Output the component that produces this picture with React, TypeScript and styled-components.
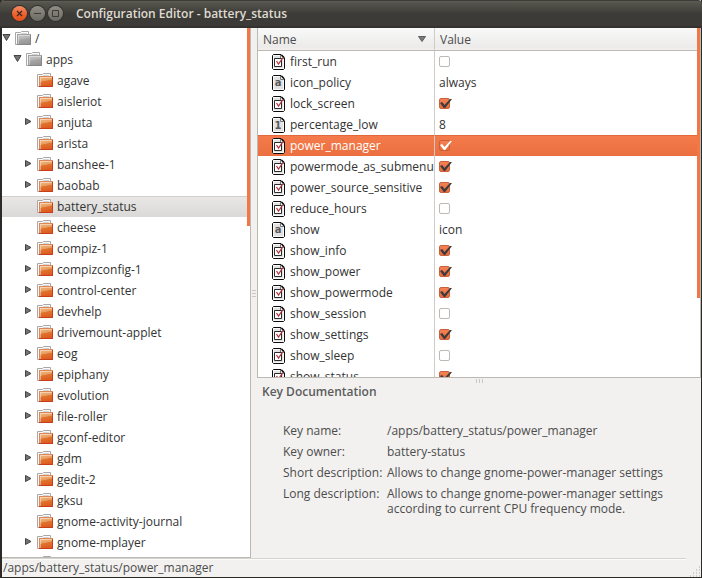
import React, { useState } from "react";
import styled, { createGlobalStyle, css } from "styled-components";

const GlobalStyle = createGlobalStyle`
  * { box-sizing: border-box; }
  body {
    margin: 0;
    background: #2b2a27;
    color: #333;
    font: 12px/21px "Open Sans", "Noto Sans", sans-serif;
  }
`;

const Window = styled.div`
  display: flex;
  flex-direction: column;
  height: 100vh;
  border: solid #2b2a27;
  border-width: 0 1px 1px 2px;
  background: #f2f1f0;
`;

const TitleBar = styled.header`
  display: flex;
  align-items: center;
  flex: none;
  gap: 3px;
  height: 28px;
  margin: 0 -1px 0 -2px;
  padding: 0 12px;
  border-top: 1px solid #3c3b37;
  border-bottom: 2px solid #33322e;
  border-radius: 4px 4px 0 0;
  background: linear-gradient(#5f5d55, #55534c 2px, #3c3b37 13px);
`;

const WindowButton = styled.button<{ $close?: boolean }>`
  display: grid;
  place-items: center;
  width: 15px;
  height: 15px;
  padding: 0;
  border: 0;
  border-radius: 50%;
  box-shadow: 0 0 0 1px #32312d;
  background: ${(p) =>
    p.$close
      ? "linear-gradient(#f58a62, #ec5f2a 60%, #e5501a)"
      : "linear-gradient(#8f8d85, #6c6a63)"};
  color: #3b2a20;

  svg {
    display: block;
  }
`;

const Title = styled.h1`
  margin: 0 0 0 10px;
  overflow: hidden;
  color: #dfdbd2;
  font-size: 12px;
  font-weight: 600;
  white-space: nowrap;
`;

const Panes = styled.main`
  display: flex;
  flex: 1;
  min-height: 0;
`;

const TreePane = styled.nav`
  display: flex;
  flex: none;
  width: 249px;
  border: solid #bcb9b2;
  border-width: 0 1px 1px 0;
  background: #fff;
`;

const ScrollArea = styled.div`
  flex: 1;
  min-width: 0;
  overflow: hidden;
`;

const Track = styled.div`
  flex: none;
  width: 3px;
`;

const Thumb = styled.div<{ $size: number }>`
  height: ${(p) => p.$size}%;
  background: #f07746;
`;

const TreeList = styled.ul`
  margin: 0;
  padding: 0;
  list-style: none;
`;

const TreeRow = styled.li<{ $level: number; $selected?: boolean }>`
  display: flex;
  align-items: center;
  gap: 4px;
  height: 21px;
  padding-left: ${(p) => p.$level * 11}px;
  white-space: nowrap;
  ${(p) =>
    p.$selected &&
    css`
      box-shadow: inset 0 1px #cfcecc;
      background: linear-gradient(#e9e8e7, #dad9d7);
    `}
`;

const Expander = styled.button`
  display: flex;
  align-items: center;
  justify-content: center;
  flex: none;
  width: 9px;
  height: 16px;
  margin-bottom: 2px;
  padding: 0;
  border: 0;
  background: none;
`;

const ExpanderGap = styled.span`
  flex: none;
  width: 9px;
`;

const NodeIcon = styled.svg`
  flex: none;
  display: block;
`;

const Grip = styled.div<{ $vertical?: boolean }>`
  display: flex;
  flex: none;
  flex-direction: ${(p) => (p.$vertical ? "column" : "row")};
  align-items: center;
  justify-content: center;
  gap: 2px;
  ${(p) => (p.$vertical ? "width: 6px;" : "height: 6px;")}

  i {
    background: #cbc8c3;
    ${(p) => (p.$vertical ? "width: 4px; height: 1px;" : "width: 1px; height: 4px;")}
  }
`;

const RightSide = styled.div`
  display: flex;
  flex: 1;
  flex-direction: column;
  min-width: 0;
`;

const KeyPane = styled.section`
  display: flex;
  flex: 1;
  min-height: 0;
  border: solid #bcb9b2;
  border-width: 0 1px 1px 1px;
  background: #fff;
`;

const KeyTable = styled.table`
  width: 100%;
  border-collapse: separate;
  border-spacing: 0;
  table-layout: fixed;
`;

const HeadCell = styled.th<{ $wide?: boolean }>`
  height: 23px;
  padding: 0;
  border-bottom: 1px solid #bcb9b2;
  border-right: ${(p) => (p.$wide ? "1px solid #cfccc7" : "0")};
  background: linear-gradient(#f9f9f9, #ecebea 19px, #f2f1f0);
  ${(p) => p.$wide && "width: 177px;"}
`;

const HeadButton = styled.button`
  display: flex;
  align-items: center;
  justify-content: space-between;
  width: 100%;
  height: 22px;
  padding: 0 8px 0 5px;
  border: 0;
  background: none;
  color: #4c4c4c;
  font: inherit;
  font-weight: 400;
`;

const KeyRow = styled.tr<{ $selected?: boolean }>`
  ${(p) =>
    p.$selected &&
    css`
      color: #fff;
      td {
        border-top: 1px solid #e2693a;
        border-right-color: #d0643c;
        background: linear-gradient(#f47b4b, #eb6f40);
      }
    `}
`;

const Cell = styled.td`
  height: 21px;
  padding: 0 0 0 4px;
  line-height: 20px;
  white-space: nowrap;
  overflow: hidden;

  &:first-child {
    padding-left: 14px;
    border-right: 1px solid #cfccc7;
  }
`;

const KeyName = styled.span`
  display: flex;
  align-items: center;
  gap: 5px;
  height: 20px;
`;

const Tick = styled.label`
  position: relative;
  display: block;
  width: 13px;
  height: 12px;

  svg {
    position: absolute;
    inset: 0;
    pointer-events: none;
  }
`;

const TickInput = styled.input`
  appearance: none;
  display: block;
  width: 11px;
  height: 11px;
  margin: 0;
  border: 1px solid #bdbab5;
  border-radius: 2px;
  background: #fff;

  &:checked {
    border-color: #c9623c;
    background: linear-gradient(#f58253, #ea6a3a);
  }
`;

const Docs = styled.section`
  flex: none;
  height: 174px;
  padding: 0 5px;
  color: #4c4c4c;
`;

const DocsTitle = styled.h2`
  margin: 0;
  color: #5c5c5c;
  font-size: 12px;
  font-weight: 600;
  line-height: 16px;
`;

const DocsList = styled.dl`
  display: grid;
  grid-template-columns: 98px minmax(0, 290px);
  gap: 6px;
  margin: 23px 0 0 21px;
  line-height: 15px;

  dt,
  dd {
    margin: 0;
    white-space: nowrap;
  }
  dd {
    white-space: normal;
  }
`;

const StatusBar = styled.footer`
  display: flex;
  align-items: flex-end;
  justify-content: space-between;
  flex: none;
  height: 19px;
  color: #4c4c4c;
`;

const StatusText = styled.div`
  flex: 1;
  height: 19px;
  padding-left: 1px;
  border-top: 1px solid #d6d4d1;
  box-shadow: inset 0 1px #fbfbfa;
  line-height: 18px;
`;

const SizeGrip = styled.svg`
  display: block;
  flex: none;
  margin-left: 4px;
`;

function Folder({ open }: { open?: boolean }) {
  const id = open ? "folder-grey" : "folder-orange";
  return (
    <NodeIcon width="16" height="16" viewBox="0 0 16 16">
      <defs>
        <linearGradient id={id} x1="0" y1="0" x2="0.25" y2="1">
          <stop offset="0" stopColor={open ? "#cccccc" : "#f3c795"} />
          <stop offset="0.5" stopColor={open ? "#b4b4b4" : "#e89a5c"} />
          <stop offset="0.55" stopColor={open ? "#a6a6a6" : "#e0742f"} />
          <stop offset="1" stopColor={open ? "#959595" : "#de5a20"} />
        </linearGradient>
      </defs>
      <path d="M2 13.500H.5v-12h5l1-1H13.500V3" fill="#fafafa" stroke="#a8a8a8" />
      <path d="M6 2.500h6" stroke="#d4d4d4" />
      <path d="M2 3h14v11H2z" fill={`url(#${id})`} />
      <path d="M2 3.500h14M2.500 4v9" fill="none" stroke={open ? "#a2a2a2" : "#dd8656"} />
      <path d="M15.500 4v9.500H2" fill="none" stroke={open ? "#868686" : "#c5401a"} />
      <path d="M3.500 13V4.500H15" fill="none" stroke="#fff" strokeOpacity="0.4" />
    </NodeIcon>
  );
}

type Kind = "bool" | "string" | "int";

const KindLetter = styled.text`
  fill: #5a5a5a;
  font: 700 10px "DejaVu Sans", sans-serif;
  text-anchor: middle;
`;

function KindIcon({ kind }: { kind: Kind }) {
  return (
    <NodeIcon width="13" height="16" viewBox="0 0 13 16" aria-hidden="true">
      <path
        d="M1.500.5h7.500l3.500 3.500v10.500l-1 1h-10l-1-1v-13z"
        fill="#e2e2e2"
        stroke="#0c0c0c"
      />
      <path d="M8 1.500H1.500v13h10V5" fill="none" stroke="#fff" strokeOpacity="0.8" />
      <path d="M8.500 1v3.500H12" fill="#f4f4f4" stroke="#777" />
      <path d="M9.500 1L12 3.500" stroke="#0c0c0c" strokeWidth="1.500" />
      {kind === "bool" && (
        <>
          <path d="M2.500 4.500h7v8h-7z" fill="#fff" stroke="#2a2a2a" />
          <path d="M4.500 7l2 3L11 3.500" fill="none" stroke="#b5363e" strokeWidth="1.300" />
        </>
      )}
      {kind === "string" && (
        <KindLetter x="6" y="11">
          a
        </KindLetter>
      )}
      {kind === "int" && (
        <KindLetter x="6" y="12">
          1
        </KindLetter>
      )}
    </NodeIcon>
  );
}

function Triangle({ open }: { open: boolean }) {
  return (
    <svg width="9" height="9" viewBox="0 0 9 9">
      <path
        d={open ? "M1 1.500h7L4.500 7.500z" : "M1.500 1.500v6L7 4.500z"}
        fill="#747474"
        stroke="#444"
      />
    </svg>
  );
}

const folders: [string, boolean][] = [
  ["agave", false],
  ["aisleriot", false],
  ["anjuta", true],
  ["arista", false],
  ["banshee-1", true],
  ["baobab", true],
  ["battery_status", false],
  ["cheese", false],
  ["compiz-1", true],
  ["compizconfig-1", true],
  ["control-center", true],
  ["devhelp", true],
  ["drivemount-applet", true],
  ["eog", true],
  ["epiphany", true],
  ["evolution", true],
  ["file-roller", true],
  ["gconf-editor", false],
  ["gdm", true],
  ["gedit-2", true],
  ["gksu", false],
  ["gnome-activity-journal", false],
  ["gnome-mplayer", true],
  ["", false],
];

const keys: { name: string; kind: Kind; value: boolean | string }[] = [
  { name: "first_run", kind: "bool", value: false },
  { name: "icon_policy", kind: "string", value: "always" },
  { name: "lock_screen", kind: "bool", value: true },
  { name: "percentage_low", kind: "int", value: "8" },
  { name: "power_manager", kind: "bool", value: true },
  { name: "powermode_as_submenu", kind: "bool", value: true },
  { name: "power_source_sensitive", kind: "bool", value: true },
  { name: "reduce_hours", kind: "bool", value: false },
  { name: "show", kind: "string", value: "icon" },
  { name: "show_info", kind: "bool", value: true },
  { name: "show_power", kind: "bool", value: true },
  { name: "show_powermode", kind: "bool", value: true },
  { name: "show_session", kind: "bool", value: false },
  { name: "show_settings", kind: "bool", value: true },
  { name: "show_sleep", kind: "bool", value: false },
  { name: "show_status", kind: "bool", value: true },
];

function TreeItem({
  name,
  level,
  expandable,
  open = false,
  selected = false,
}: {
  name: string;
  level: number;
  expandable: boolean;
  open?: boolean;
  selected?: boolean;
}) {
  return (
    <TreeRow $level={level} $selected={selected} role="treeitem" aria-level={level + 1} aria-selected={selected}>
      {expandable ? (
        <Expander aria-label={`Toggle ${name}`} aria-expanded={open}>
          <Triangle open={open} />
        </Expander>
      ) : (
        <ExpanderGap />
      )}
      <Folder open={open} />
      <span>{name}</span>
    </TreeRow>
  );
}

function BoolValue({ name, initial, selected }: { name: string; initial: boolean; selected: boolean }) {
  const [on, setOn] = useState(initial);
  return (
    <Tick>
      <TickInput type="checkbox" aria-label={name} checked={on} onChange={() => setOn(!on)} />
      {on && (
        <svg width="13" height="12" viewBox="0 0 13 12">
          <path
            d="M1 5l2.200-1 2.300 3L11 1h2L6.200 10H4.800z"
            fill={selected ? "#fff" : "#3c3c3c"}
          />
        </svg>
      )}
    </Tick>
  );
}

export default function App() {
  return (
    <>
      <GlobalStyle />
      <Window>
        <TitleBar>
          <WindowButton $close aria-label="Close">
            <svg width="9" height="9" viewBox="0 0 9 9">
              <path d="M2 2l5 5M7 2L2 7" stroke="currentColor" strokeWidth="1.300" />
            </svg>
          </WindowButton>
          <WindowButton aria-label="Minimize">
            <svg width="9" height="9" viewBox="0 0 9 9">
              <path d="M1 4.500h7" stroke="#3c3b37" />
            </svg>
          </WindowButton>
          <WindowButton aria-label="Maximize">
            <svg width="9" height="9" viewBox="0 0 9 9">
              <path d="M1.500 1.500h6v6h-6z" fill="none" stroke="#3c3b37" />
            </svg>
          </WindowButton>
          <Title>Configuration Editor - battery_status</Title>
        </TitleBar>

        <Panes>
          <TreePane aria-label="Folders">
            <ScrollArea>
              <TreeList role="tree">
                <TreeItem name="/" level={0} expandable open />
                <TreeItem name="apps" level={1} expandable open />
                {folders.map(([name, expandable]) => (
                  <TreeItem
                    key={name}
                    name={name}
                    level={2}
                    expandable={expandable}
                    selected={name === "battery_status"}
                  />
                ))}
              </TreeList>
            </ScrollArea>
            <Track>
              <Thumb $size={37.5} />
            </Track>
          </TreePane>

          <Grip $vertical>
            <i />
            <i />
            <i />
          </Grip>

          <RightSide>
            <KeyPane>
              <ScrollArea>
                <KeyTable>
                  <thead>
                    <tr>
                      <HeadCell $wide scope="col">
                        <HeadButton>
                          Name
                          <svg width="8" height="6" viewBox="0 0 8 6">
                            <path d="M.5.5h7L4 5.500z" fill="#7c7c7c" stroke="#5c5c5c" />
                          </svg>
                        </HeadButton>
                      </HeadCell>
                      <HeadCell scope="col">
                        <HeadButton>Value</HeadButton>
                      </HeadCell>
                    </tr>
                  </thead>
                  <tbody>
                    {keys.map((k) => {
                      const selected = k.name === "power_manager";
                      return (
                        <KeyRow key={k.name} $selected={selected}>
                          <Cell>
                            <KeyName>
                              <KindIcon kind={k.kind} />
                              {k.name}
                            </KeyName>
                          </Cell>
                          <Cell>
                            {typeof k.value === "boolean" ? (
                              <BoolValue name={k.name} initial={k.value} selected={selected} />
                            ) : (
                              k.value
                            )}
                          </Cell>
                        </KeyRow>
                      );
                    })}
                  </tbody>
                </KeyTable>
              </ScrollArea>
              <Track>
                <Thumb $size={77.5} />
              </Track>
            </KeyPane>

            <Grip>
              <i />
              <i />
              <i />
            </Grip>

            <Docs>
              <DocsTitle>Key Documentation</DocsTitle>
              <DocsList>
                <dt>Key name:</dt>
                <dd>/apps/battery_status/power_manager</dd>
                <dt>Key owner:</dt>
                <dd>battery-status</dd>
                <dt>Short description:</dt>
                <dd>Allows to change gnome-power-manager settings</dd>
                <dt>Long description:</dt>
                <dd>Allows to change gnome-power-manager settings according to current CPU frequency mode.</dd>
              </DocsList>
            </Docs>
          </RightSide>
        </Panes>

        <StatusBar>
          <StatusText>/apps/battery_status/power_manager</StatusText>
          <SizeGrip width="11" height="11" viewBox="0 0 11 11">
            <path
              d="M9 1h1M9 4h1M6 4h1M9 7h1M6 7h1M3 7h1M9 10h1M6 10h1M3 10h1M0 10h1"
              stroke="#c4c1bc"
              strokeWidth="1.500"
            />
          </SizeGrip>
        </StatusBar>
      </Window>
    </>
  );
}
